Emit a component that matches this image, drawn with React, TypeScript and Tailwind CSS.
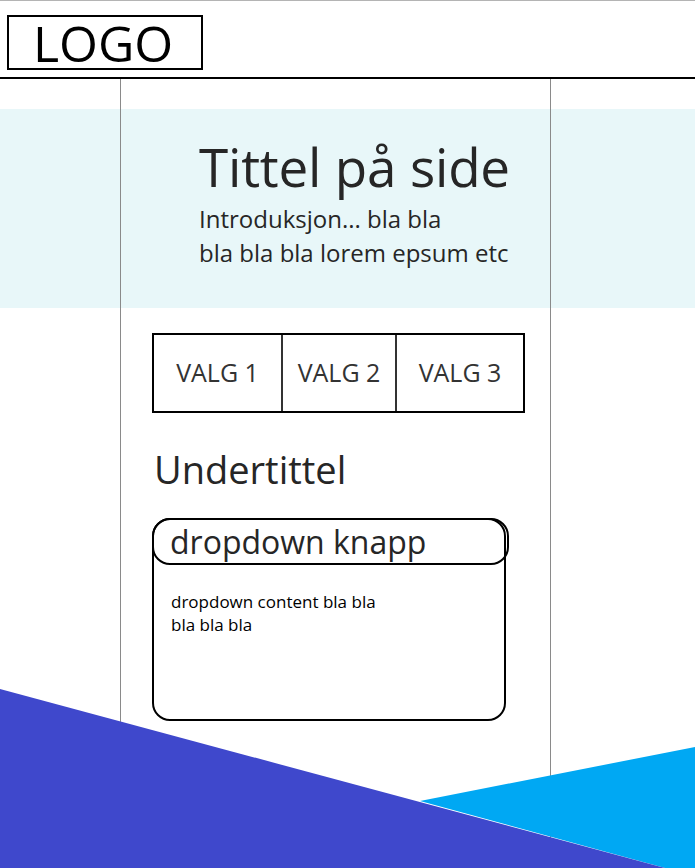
const tabs = ['VALG 1', 'VALG 2', 'VALG 3'];

const App = () => {
  return (
    <div className="relative h-[868px] w-[695px] overflow-hidden bg-white font-['Open_Sans',sans-serif] text-[#262626]">
      {/* header */}
      <header className="box-border h-[79px] border-t border-b-2 border-t-[#b4b4b4] border-b-black pl-[7px] pt-[14px]">
        <div className="box-border flex h-[55px] w-[196px] items-center border-2 border-black pl-[24px]">
          <span className="text-[50px] leading-none text-black">LOGO</span>
        </div>
      </header>

      {/* columns */}
      <div className="grid h-[789px] grid-cols-[121px_430px_1fr]">
        <div className="border-r border-[#8a8a8a]">
          <div className="mt-[30px] h-[199px] bg-[#e8f7f9]" />
        </div>

        <main className="border-r border-[#8a8a8a]">
          <section className="mt-[30px] h-[199px] bg-[#e8f7f9] pl-[78px] pt-[30px]">
            <h1 className="text-[53px] leading-[56px] tracking-[-0.2px]">Tittel på side</h1>
            <p className="mt-[7px] text-[24px] leading-[34px]">
              Introduksjon... bla bla
              <br />
              bla bla bla lorem epsum etc
            </p>
          </section>

          <div className="pl-[31px] pt-[25px]">
            <nav className="box-border grid h-[80px] w-[373px] grid-cols-[129px_114px_1fr] border-2 border-black">
              {tabs.map((t, i) => (
                <div
                  key={t}
                  className={`flex items-center justify-center text-[25px] text-[#333] ${i < 2 ? 'border-r-2 border-[#333]' : ''}`}
                >
                  {t}
                </div>
              ))}
            </nav>

            <h2 className="mt-[33px] pl-[2px] text-[38px] leading-[46px]">Undertittel</h2>

            <div className="mt-[26px] box-border h-[203px] w-[354px] rounded-[18px] border-2 border-black">
              <button className="-mx-[2px] -mt-[2px] mr-[-3px] box-border block h-[47px] w-[357px] rounded-[18px] border-2 border-black pl-[16px] text-left text-[32px] leading-[38px]">
                dropdown knapp
              </button>
              <p className="pl-[17px] pt-[25px] text-[17px] leading-[23px] text-black">
                dropdown content bla bla
                <br />
                bla bla bla
              </p>
            </div>
          </div>
        </main>

        <div>
          <div className="mt-[30px] h-[199px] bg-[#e8f7f9]" />
        </div>
      </div>

      {/* decorative triangles */}
      <svg className="absolute bottom-0 left-0" width="695" height="179" viewBox="0 0 695 179">
        <polygon points="695,58 420,112 665,179 695,179" fill="#00a8f3" />
        <polygon points="0,0 665,179 0,179" fill="#3f48cc" />
      </svg>
    </div>
  );
};

export default App;
